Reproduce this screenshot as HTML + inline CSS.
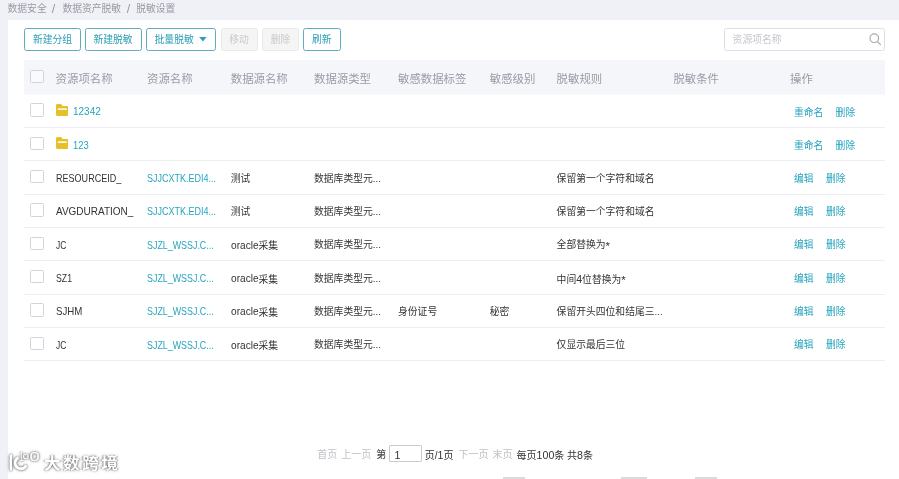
<!DOCTYPE html>
<html lang="zh-CN"><head><meta charset="utf-8"><title>脱敏设置</title>
<style>
*{box-sizing:border-box;margin:0;padding:0}
html,body{width:899px;height:479px;overflow:hidden;background:#f0f1f6}
body{position:relative;font-family:"Liberation Sans","Noto Sans CJK SC",sans-serif;font-size:9.8px;color:#333;line-height:1}
.abs{position:absolute;white-space:nowrap}
.panel{position:absolute;left:8px;top:20px;width:891px;height:459px;background:#fff}
.wrap{position:absolute;left:0;top:0;width:899px;height:479px;will-change:transform}
.crumb{top:3.3px;font-size:9.8px;color:#969aa4;line-height:12px}
.btn{position:absolute;top:28.2px;height:22.6px;border:1px solid #5eaebd;border-radius:2.5px;color:#2a9fb6;font-size:9.8px;line-height:22.2px;background:#fff;white-space:nowrap}
.btn span{position:absolute;top:0}
.btn.dis{border-color:#e9e9e9;background:#f5f5f5;color:#cacaca}
.search{position:absolute;left:724px;top:28.2px;width:161px;height:22.6px;border:1px solid #dcdfe4;border-radius:2.5px;background:#fff}
.search span{position:absolute;left:7.6px;top:.7px;line-height:20.4px;color:#c4c6cc;font-size:9.8px}
.thead{position:absolute;left:24px;top:60px;width:861px;height:34px;background:#f5f6fa;border-bottom:0}
.thead:after{content:'';position:absolute;left:0;top:34px;width:100%;height:1px;background:#f9fafc}
.th{font-size:11.4px;color:#979ca6;line-height:14px}
.cb{position:absolute;width:13.3px;height:13.3px;border:1px solid #d2d4db;border-radius:1.5px;background:#fff}
.line{position:absolute;left:24px;width:861px;height:1px;background:#eceef2}
.td{font-size:9.8px;color:#333;line-height:14px}
.lk{color:#27a4be}
.lat{display:inline-block;position:relative;top:-.6px;font-size:10.5px;transform-origin:0 50%;letter-spacing:0}
.pg{font-size:10px;line-height:14px;top:447.600px}
.g{color:#c0c2c6}
.dg{font-size:10.600px}
.ast{font-size:11.5px;line-height:0;position:relative;top:1.5px}
.cj{position:relative;top:.6px}
</style></head><body>
<div class="wrap">
<div class="panel"></div>
<div class="abs crumb" style="left:7.5px">数据安全</div>
<div class="abs crumb" style="left:51.8px;font-size:12.5px;top:2.6px">/</div>
<div class="abs crumb" style="left:62.4px">数据资产脱敏</div>
<div class="abs crumb" style="left:126.8px;font-size:12.5px;top:2.6px">/</div>
<div class="abs crumb" style="left:136.2px">脱敏设置</div>
<div class="btn" style="left:24.2px;width:56.5px"><span style="left:7.7px">新建分组</span></div>
<div class="btn" style="left:85px;width:56.5px"><span style="left:7.4px">新建脱敏</span></div>
<div class="btn" style="left:146.2px;width:69.4px"><span style="left:7.4px">批量脱敏</span><svg style="position:absolute;left:51.6px;top:7.6px" width="8" height="5" viewBox="0 0 8 5"><path d="M0.2 0h7.4L3.9 4.4z" fill="#2a9fb6"/></svg></div>
<div class="btn dis" style="left:220.5px;width:37px"><span style="left:7.8px">移动</span></div>
<div class="btn dis" style="left:262px;width:36.6px"><span style="left:7.8px">删除</span></div>
<div class="btn" style="left:303px;width:37.5px"><span style="left:7.9px">刷新</span></div>
<div class="search"><span>资源项名称</span><svg style="position:absolute;left:142.8px;top:3.2px" width="14" height="14" viewBox="0 0 14 14"><circle cx="6.3" cy="6.2" r="4.3" fill="none" stroke="#a9acb1" stroke-width="1.2"/><path d="M9.5 9.6L12.4 12.6" stroke="#a9acb1" stroke-width="1.3" stroke-linecap="round"/></svg></div>
<div class="thead"></div>

<div class="cb" style="left:30.4px;top:70px;background:#f9fafc"></div>
<div class="abs th" style="left:55.6px;top:71.8px">资源项名称</div>
<div class="abs th" style="left:147px;top:71.8px">资源名称</div>
<div class="abs th" style="left:230.8px;top:71.8px">数据源名称</div>
<div class="abs th" style="left:314px;top:71.8px">数据源类型</div>
<div class="abs th" style="left:398px;top:71.8px">敏感数据标签</div>
<div class="abs th" style="left:489.8px;top:71.8px">敏感级别</div>
<div class="abs th" style="left:556.6px;top:71.8px">脱敏规则</div>
<div class="abs th" style="left:673.4px;top:71.8px">脱敏条件</div>
<div class="abs th" style="left:790px;top:71.8px">操作</div>
<div class="cb" style="left:30.4px;top:103.37px"></div>
<svg class="abs" style="left:55.9px;top:103.97px" width="12.5" height="12" viewBox="0 0 13 12.4"><path d="M1.6 0h3.1c.5 0 .9.2 1.2.6l1 1.5h4.500c.9 0 1.6.7 1.6 1.6v7.100c0 .9-.7 1.6-1.6 1.6H1.6C.7 12.4 0 11.7 0 10.800V1.6C0 .7.7 0 1.6 0z" fill="#e6c02a"/><rect x="1.7" y="4.4" width="9.6" height="1.7" rx=".5" fill="#fff" opacity=".85"/></svg>
<div class="abs td lk" style="left:73.2px;top:104.97px"><span class="lat" style="transform:scaleX(0.9520);margin-right:-1.40px">12342</span></div>
<div class="abs td lk" style="left:794px;top:106.07px">重命名</div>
<div class="abs td lk" style="left:835.6px;top:106.07px">删除</div>
<div class="line" style="top:127.00px"></div>
<div class="cb" style="left:30.4px;top:136.70px"></div>
<svg class="abs" style="left:55.9px;top:137.30px" width="12.5" height="12" viewBox="0 0 13 12.4"><path d="M1.6 0h3.1c.5 0 .9.2 1.2.6l1 1.5h4.500c.9 0 1.6.7 1.6 1.6v7.100c0 .9-.7 1.6-1.6 1.6H1.6C.7 12.4 0 11.7 0 10.800V1.6C0 .7.7 0 1.6 0z" fill="#e6c02a"/><rect x="1.7" y="4.4" width="9.6" height="1.7" rx=".5" fill="#fff" opacity=".85"/></svg>
<div class="abs td lk" style="left:73.2px;top:138.30px"><span class="lat" style="transform:scaleX(0.8955);margin-right:-1.83px">123</span></div>
<div class="abs td lk" style="left:794px;top:139.40px">重命名</div>
<div class="abs td lk" style="left:835.6px;top:139.40px">删除</div>
<div class="line" style="top:160.34px"></div>
<div class="cb" style="left:30.4px;top:170.03px"></div>
<div class="abs td" style="left:55.6px;top:171.63px"><span class="lat" style="transform:scaleX(0.8608);margin-right:-10.56px">RESOURCEID_</span></div>
<div class="abs td lk" style="left:147px;top:171.63px"><span class="lat" style="transform:scaleX(0.8568);margin-right:-11.53px">SJJCXTK.EDI4...</span></div>
<div class="abs td" style="left:230.8px;top:171.63px">测试</div>
<div class="abs td" style="left:314px;top:171.63px">数据库类型元...</div>
<div class="abs td" style="left:556.6px;top:171.63px">保留第一个字符和域名</div>
<div class="abs td lk" style="left:794px;top:171.63px">编辑</div>
<div class="abs td lk" style="left:826px;top:171.63px">删除</div>
<div class="line" style="top:193.67px"></div>
<div class="cb" style="left:30.4px;top:203.37px"></div>
<div class="abs td" style="left:55.6px;top:204.97px"><span class="lat" style="transform:scaleX(0.9508);margin-right:-4.00px">AVGDURATION_</span></div>
<div class="abs td lk" style="left:147px;top:204.97px"><span class="lat" style="transform:scaleX(0.8568);margin-right:-11.53px">SJJCXTK.EDI4...</span></div>
<div class="abs td" style="left:230.8px;top:204.97px">测试</div>
<div class="abs td" style="left:314px;top:204.97px">数据库类型元...</div>
<div class="abs td" style="left:556.6px;top:204.97px">保留第一个字符和域名</div>
<div class="abs td lk" style="left:794px;top:204.97px">编辑</div>
<div class="abs td lk" style="left:826px;top:204.97px">删除</div>
<div class="line" style="top:227.00px"></div>
<div class="cb" style="left:30.4px;top:236.70px"></div>
<div class="abs td" style="left:55.6px;top:238.30px"><span class="lat" style="transform:scaleX(0.8019);margin-right:-2.54px">JC</span></div>
<div class="abs td lk" style="left:147px;top:238.30px"><span class="lat" style="transform:scaleX(0.8468);margin-right:-12.07px">SJZL_WSSJ.C...</span></div>
<div class="abs td" style="left:230.8px;top:238.30px"><span class="lat" style="transform:scaleX(0.9647);margin-right:-1.01px">oracle</span>采集</div>
<div class="abs td" style="left:314px;top:238.30px">数据库类型元...</div>
<div class="abs td" style="left:556.6px;top:238.30px">全部替换为<span class="ast">*</span></div>
<div class="abs td lk" style="left:794px;top:238.30px">编辑</div>
<div class="abs td lk" style="left:826px;top:238.30px">删除</div>
<div class="line" style="top:260.33px"></div>
<div class="cb" style="left:30.4px;top:270.03px"></div>
<div class="abs td" style="left:55.6px;top:271.63px"><span class="lat" style="transform:scaleX(0.8305);margin-right:-3.27px">SZ1</span></div>
<div class="abs td lk" style="left:147px;top:271.63px"><span class="lat" style="transform:scaleX(0.8468);margin-right:-12.07px">SJZL_WSSJ.C...</span></div>
<div class="abs td" style="left:230.8px;top:271.63px"><span class="lat" style="transform:scaleX(0.9647);margin-right:-1.01px">oracle</span>采集</div>
<div class="abs td" style="left:314px;top:271.63px">数据库类型元...</div>
<div class="abs td" style="left:556.6px;top:271.63px">中间<span class="dg">4</span>位替换为<span class="ast">*</span></div>
<div class="abs td lk" style="left:794px;top:271.63px">编辑</div>
<div class="abs td lk" style="left:826px;top:271.63px">删除</div>
<div class="line" style="top:293.67px"></div>
<div class="cb" style="left:30.4px;top:303.36px"></div>
<div class="abs td" style="left:55.6px;top:304.96px"><span class="lat" style="transform:scaleX(0.9198);margin-right:-2.29px">SJHM</span></div>
<div class="abs td lk" style="left:147px;top:304.96px"><span class="lat" style="transform:scaleX(0.8468);margin-right:-12.07px">SJZL_WSSJ.C...</span></div>
<div class="abs td" style="left:230.8px;top:304.96px"><span class="lat" style="transform:scaleX(0.9647);margin-right:-1.01px">oracle</span>采集</div>
<div class="abs td" style="left:314px;top:304.96px">数据库类型元...</div>
<div class="abs td" style="left:398px;top:304.96px">身份证号</div>
<div class="abs td" style="left:489.8px;top:304.96px">秘密</div>
<div class="abs td" style="left:556.6px;top:304.96px">保留开头四位和结尾三...</div>
<div class="abs td lk" style="left:794px;top:304.96px">编辑</div>
<div class="abs td lk" style="left:826px;top:304.96px">删除</div>
<div class="line" style="top:327.00px"></div>
<div class="cb" style="left:30.4px;top:336.70px"></div>
<div class="abs td" style="left:55.6px;top:338.30px"><span class="lat" style="transform:scaleX(0.8019);margin-right:-2.54px">JC</span></div>
<div class="abs td lk" style="left:147px;top:338.30px"><span class="lat" style="transform:scaleX(0.8468);margin-right:-12.07px">SJZL_WSSJ.C...</span></div>
<div class="abs td" style="left:230.8px;top:338.30px"><span class="lat" style="transform:scaleX(0.9647);margin-right:-1.01px">oracle</span>采集</div>
<div class="abs td" style="left:314px;top:338.30px">数据库类型元...</div>
<div class="abs td" style="left:556.6px;top:338.30px">仅显示最后三位</div>
<div class="abs td lk" style="left:794px;top:338.30px">编辑</div>
<div class="abs td lk" style="left:826px;top:338.30px">删除</div>
<div class="line" style="top:360.33px"></div>
<div class="abs pg g" style="left:317.2px">首页</div>
<div class="abs pg g" style="left:341.2px">上一页</div>
<div class="abs pg" style="left:376.2px">第</div>
<div class="abs" style="left:389px;top:444.8px;width:32.7px;height:17px;border:1px solid #c9ccd1;border-radius:1px;background:#fff"></div>
<div class="abs pg" style="left:394.4px"><span class="dg">1</span></div>
<div class="abs pg" style="left:424.8px">页/<span class="dg">1</span>页</div>
<div class="abs pg g" style="left:458.4px">下一页</div>
<div class="abs pg g" style="left:492.6px">末页</div>
<div class="abs pg" style="left:516.6px;">每页<span class="dg">100</span>条 共<span class="dg">8</span>条</div>
<svg class="abs" style="left:0;top:440px;filter:drop-shadow(0 0 .8px rgba(0,0,0,.55)) drop-shadow(0 0 1.6px rgba(0,0,0,.3))" width="130" height="39" viewBox="0 440 130 39"><path d="M9.6 455.2l2.400-1.400v16.700h-2.400z" fill="#fff"/><path d="M27.57 465.87A7.3 7.3 0 1 1 17.93 456.23L19.11 458.88A4.4 4.4 0 1 0 24.92 464.69z" fill="#fff"/><g font-family="Liberation Sans,sans-serif" fill="#fff" stroke="#fff" stroke-width=".15"><text transform="translate(19.3 460.8) scale(.6 1)" font-size="13" fill="#fff" stroke="none">1</text><text transform="translate(22.400 458.900) scale(1.5 1)" font-size="8">0</text><text transform="translate(29.600 460.800) scale(1.5 1)" font-size="12.200">0</text></g></svg>
<div class="abs" style="left:44px;top:452px;font-size:16.6px;line-height:24px;color:#fff;font-weight:700;letter-spacing:2.5px;transform:scaleY(.94);transform-origin:0 80%;filter:drop-shadow(0 0 .8px rgba(0,0,0,.6)) drop-shadow(0 0 1.6px rgba(0,0,0,.35))">大数跨境</div>
<div class="abs" style="left:502.5px;top:476.7px;width:22px;height:3px;background:#dadbdd"></div>
<div class="abs" style="left:621px;top:476.7px;width:26px;height:3px;background:#dadbdd"></div>
<div class="abs" style="left:694.5px;top:476.7px;width:22px;height:3px;background:#dadbdd"></div>
</div>
</body></html>
